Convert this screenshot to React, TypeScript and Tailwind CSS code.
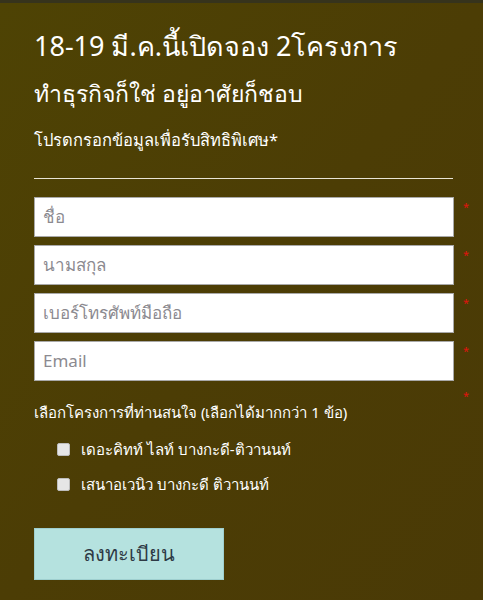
export default function App() {
  const fields = ["ชื่อ", "นามสกุล", "เบอร์โทรศัพท์มือถือ", "Email"];
  const projects = ["เดอะคิทท์ ไลท์ บางกะดี-ติวานนท์", "เสนาอเวนิว บางกะดี ติวานนท์"];

  return (
    <div
      className="w-[483px] h-[600px] overflow-hidden border-t-[3px] border-[#36331c] bg-gradient-to-br from-[#4e4304] via-[#4c3d05] to-[#4a3a06] text-white"
      style={{ fontFamily: '"Noto Sans", "Liberation Sans", sans-serif' }}
    >
      <div className="pl-[34px] pt-[25px]">
        <h1 className="text-[27px] leading-[36px] text-white">18-19 มี.ค.นี้เปิดจอง 2โครงการ</h1>
        <h2 className="mt-[13px] text-[23px] leading-[32px] text-white">ทำธุรกิจก็ใช่ อยู่อาศัยก็ชอบ</h2>
        <p className="mt-[19px] text-[16.5px] leading-[24px] text-white">โปรดกรอกข้อมูลเพื่อรับสิทธิพิเศษ*</p>
        <div className="mt-[26px] h-px w-[419px] bg-[#e8e4d6]" />

        <div className="mt-[18px] flex flex-col gap-[8px]">
          {fields.map((f) => (
            <div key={f} className="flex items-start">
              <div className="flex h-[40px] w-[420px] items-center border border-[#a9a9a9] bg-white px-[8px] text-[17px] text-[#8c8a90]">
                {f}
              </div>
              <span className="ml-[9px] mt-[4px] text-[11px] leading-[12px] text-[#e0120e]">*</span>
            </div>
          ))}
        </div>

        <div className="flex items-start">
          <p className="mt-[20px] w-[429px] text-[15px] leading-[22px] text-white">
            เลือกโครงการที่ท่านสนใจ (เลือกได้มากกว่า 1 ข้อ)
          </p>
          <span className="mt-[9px] text-[11px] leading-[12px] text-[#e0120e]">*</span>
        </div>

        <div className="mt-[15px] flex flex-col gap-[13px] pl-[23px]">
          {projects.map((p) => (
            <label key={p} className="flex items-center gap-[11px] text-[15px] leading-[22px] text-white">
              <span className="h-[13px] w-[13px] rounded-[2px] border border-[#bdbdbd] bg-[#e6e6e6]" />
              {p}
            </label>
          ))}
        </div>

        <button className="mt-[33px] h-[52px] w-[190px] border border-[#9fcfcf] bg-[#b5e2df] text-[20px] text-[#2e3a45]">
          ลงทะเบียน
        </button>
      </div>
    </div>
  );
}
